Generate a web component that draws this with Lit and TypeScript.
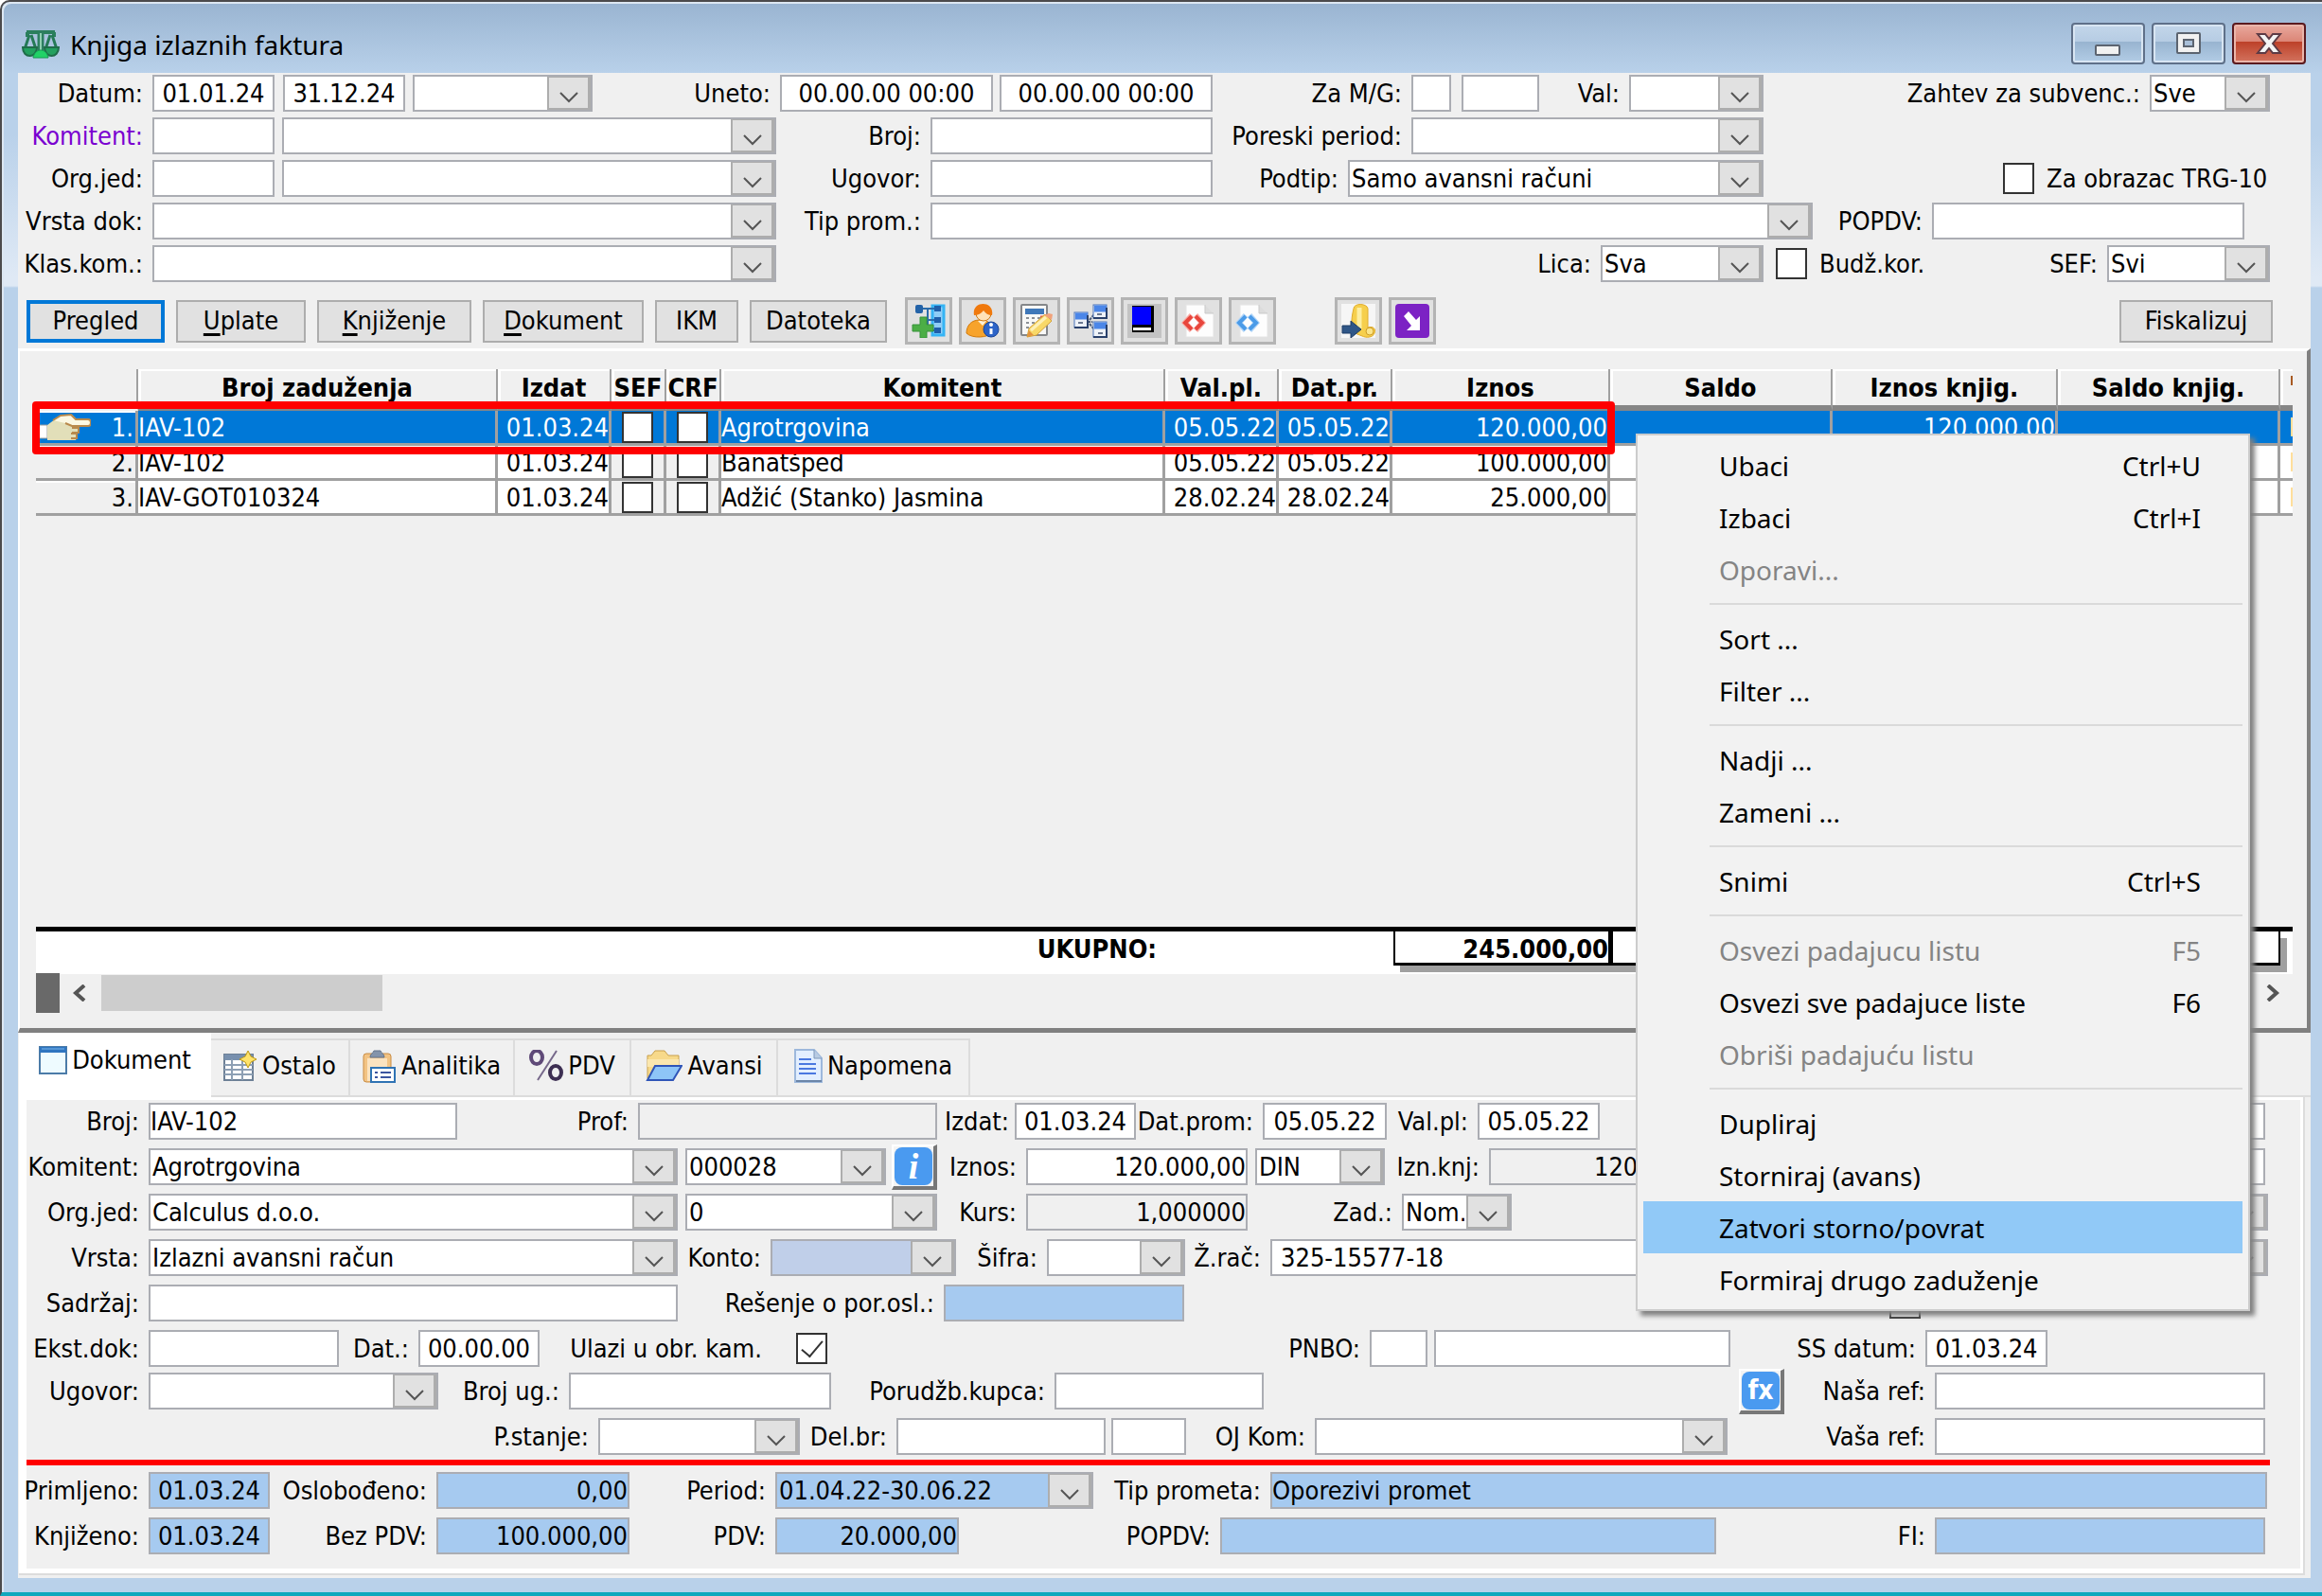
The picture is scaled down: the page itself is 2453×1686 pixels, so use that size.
import { LitElement, html, svg, css, nothing, TemplateResult } from "lit";
import { customElement } from "lit/decorators.js";
import { classMap } from "lit/directives/class-map.js";
import { styleMap } from "lit/directives/style-map.js";

/* ---------- form description ---------- */

interface Cell {
  kind: "label" | "after" | "field" | "combo" | "gap" | "check" | "tool";
  w: number;
  text?: string;
  cls?: string;
  checked?: boolean;
  icon?: TemplateResult;
}

const L = (text: string, w: number, cls = ""): Cell => ({ kind: "label", w, text, cls });
const A = (text: string, w: number): Cell => ({ kind: "after", w, text });
const F = (w: number, text = "", cls = ""): Cell => ({ kind: "field", w, text, cls });
const C = (w: number, text = "", cls = ""): Cell => ({ kind: "combo", w, text, cls });
const G = (w: number): Cell => ({ kind: "gap", w });
const K = (w: number, checked = false): Cell => ({ kind: "check", w, checked });
const T = (w: number, text: string, icon: TemplateResult): Cell => ({ kind: "tool", w, text, icon });

const infoGlyph = html`<span class="glyph glyph-i">i</span>`;
const fxGlyph = html`<span class="glyph">fx</span>`;

const filterRows: Cell[][] = [
  [L("Datum:", 142), F(129, "01.01.24", "mid"), G(9), F(129, "31.12.24", "mid"), G(8), C(190), L("Uneto:", 198),
    F(225, "00.00.00 00:00", "mid"), G(7), F(225, "00.00.00 00:00", "mid"), L("Za M/G:", 210), F(42), G(11), F(82),
    L("Val:", 95), C(142), L("Zahtev za subvenc.:", 408), C(127, "Sve"), G(43)],
  [L("Komitent:", 142, "violet"), F(129), G(8), C(522), L("Broj:", 163), F(298), L("Poreski period:", 210), C(372), G(578)],
  [L("Org.jed:", 142), F(129), G(8), C(522), L("Ugovor:", 163), F(298), L("Podtip:", 143), C(439, "Samo avansni računi"),
    G(253), K(33), A("Za obrazac TRG-10", 292)],
  [L("Vrsta dok:", 142), C(659), L("Tip prom.:", 163), C(932), L("POPDV:", 126), F(330), G(70)],
  [L("Klas.kom.:", 142), C(659), L("Lica:", 871), C(172, "Sva"), G(13), K(33), A("Budž.kor.", 133), L("SEF:", 184),
    C(172, "Svi"), G(43)],
];

const detailRows: Cell[][] = [
  [L("Broj:", 129), F(326, "IAV-102", "flush"), L("Prof:", 191), F(316, "", "off"), L("Izdat:", 82, "tight"),
    F(128, "01.03.24", "mid"), L("Dat.prom:", 134), F(131, "05.05.22", "mid"), L("Val.pl:", 96), F(129, "05.05.22", "mid"),
    G(354), F(349), G(37)],
  [L("Komitent:", 129), C(559, "Agrotrgovina"), G(8), C(212, "000028"), G(6), T(48, "Informacije", infoGlyph),
    L("Iznos:", 94), F(234, "120.000,00", "end"), G(8), C(137, "DIN"), L("Izn.knj:", 110), F(252, "120.000,00", "end off"),
    G(219), F(349), G(37)],
  [L("Org.jed:", 129), C(559, "Calculus d.o.o."), G(8), C(266, "0"), L("Kurs:", 94), F(234, "1,000000", "end off"),
    L("Zad.:", 163), C(116, "Nom."), G(447), C(352), G(34)],
  [L("Vrsta:", 129), C(559, "Izlazni avansni račun"), L("Konto:", 98), C(196, "", "lilac"), L("Šifra:", 96), C(146),
    L("Ž.rač:", 90), F(483, "325-15577-18", "inset"), G(219), C(352), G(34)],
  [L("Sadržaj:", 129), F(559), L("Rešenje o por.osl.:", 281), F(254, "", "blue"), G(745), K(33), G(401)],
  [L("Ekst.dok:", 129), F(201), L("Dat.:", 84), F(128, "00.00.00", "mid"), L("Ulazi u obr. kam.", 245), G(26), K(33, true),
    L("PNBO:", 573), F(61), G(7), F(313), L("SS datum:", 206), F(129, "01.03.24", "mid"), G(267)],
];

const referenceRows: Cell[][] = [
  [L("Ugovor:", 129), C(306), L("Broj ug.:", 138), F(277), L("Porudžb.kupca:", 236), F(221), G(502),
    T(48, "Formula", fxGlyph), L("Naša ref:", 159), F(349), G(37)],
  [L("P.stanje:", 604), C(213), L("Del.br:", 102), F(221), G(6), F(79), L("OJ Kom:", 136), C(436), L("Vaša ref:", 219),
    F(349), G(37)],
];

const postingRows: Cell[][] = [
  [L("Primljeno:", 129), F(128, "01.03.24", "mid blue"), L("Oslobođeno:", 176), F(204, "0,00", "end blue"),
    L("Period:", 154), C(336, "01.04.22-30.06.22", "blue"), L("Tip prometa:", 187), F(1053, "Oporezivi promet", "flush blue"), G(35)],
  [L("Knjiženo:", 129), F(128, "01.03.24", "mid blue"), L("Bez PDV:", 176), F(204, "100.000,00", "end blue"),
    L("PDV:", 154), F(194, "20.000,00", "end blue"), L("POPDV:", 276), F(524, "", "blue"), L("FI:", 231), F(349, "", "blue"), G(37)],
];

/* ---------- invoice grid ---------- */

const columns: [string, number][] = [
  ["", 108], ["Broj zaduženja", 380], ["Izdat", 120], ["SEF", 58], ["CRF", 58], ["Komitent", 469], ["Val.pl.", 120],
  ["Dat.pr.", 120], ["Iznos", 230], ["Saldo", 235], ["Iznos knjig.", 238], ["Saldo knjig.", 235], ["", 13],
];
const gridWidth = columns.reduce((sum, c) => sum + c[1], 0);

const invoices = [
  { no: "IAV-102", issued: "01.03.24", client: "Agrotrgovina", due: "05.05.22", traded: "05.05.22", amount: "120.000,00" },
  { no: "IAV-102", issued: "01.03.24", client: "Banatšped", due: "05.05.22", traded: "05.05.22", amount: "100.000,00" },
  { no: "IAV-GOT010324", issued: "01.03.24", client: "Adžić (Stanko) Jasmina", due: "28.02.24", traded: "28.02.24", amount: "25.000,00" },
];

/* ---------- context menu ---------- */

type MenuEntry = [string, string?, string?] | null;
const menu: MenuEntry[] = [
  ["Ubaci", "Ctrl+U"], ["Izbaci", "Ctrl+I"], ["Oporavi...", "", "dim"], null,
  ["Sort ..."], ["Filter ..."], null,
  ["Nadji ..."], ["Zameni ..."], null,
  ["Snimi", "Ctrl+S"], null,
  ["Osvezi padajucu listu", "F5", "dim"], ["Osvezi sve padajuce liste", "F6"], ["Obriši padajuću listu", "", "dim"], null,
  ["Dupliraj"], ["Storniraj (avans)"], ["Zatvori storno/povrat", "", "hot"], ["Formiraj drugo zaduženje"],
];

/* ---------- icons ---------- */

const icon = (w: number, h: number, body: TemplateResult) =>
  html`<svg width=${w} height=${h} viewBox="0 0 ${w} ${h}" fill="none" aria-hidden="true">${body}</svg>`;

const scales = icon(40, 30, svg`
  <path d="M5 2h30M6 2v5M34 2v5" stroke="#2b7f5d" stroke-width="4"/>
  <path d="M20 1v22" stroke="#2d7f60" stroke-width="7"/><path d="M20 3v19" stroke="#8fcfb0" stroke-width="2"/>
  <path d="M8 5 3 20h12L10 5M32 5l5 15H25l5-15" stroke="#257a56" stroke-width="3" stroke-linejoin="round"/>
  <path d="M1 18h15c0 12-15 12-15 0zM24 18h15c0 12-15 12-15 0z" fill="#23a05f" stroke="#1f6d49" stroke-width="2"/>
  <path d="M12 29c1-5 4-8 8-8s7 3 8 8z" fill="#21d267" stroke="#159a52"/>`);

const treeAdd = icon(36, 36, svg`
  <rect x="22" y="2" width="12" height="31" fill="#8fcdf6" stroke="#35b4f5" stroke-width="3"/>
  <path d="M8 5h17M17 5v23M17 17h8M17 28h8" stroke="#2b6cab" stroke-width="2"/>
  <rect x="4" y="1" width="8" height="9" rx="2" fill="#2463a8"/>
  <path d="M24 2h7v6h-7zM24 14h7v6h-7zM24 25h7v6h-7z" fill="#1f5fab"/>
  <path d="M9 14h7v8h7v7h-7v7H9v-7H1v-7h8z" fill="#4cae46" stroke="#36923a"/>`);

const userInfo = icon(36, 36, svg`
  <path d="M1 31c0-8 5-14 14-14s14 4 14 13c-5 6-22 7-28 1z" fill="#f7a32b" stroke="#d27a0c"/>
  <path d="M13 18l5 5 5-6z" fill="#fff1d6"/><circle cx="19" cy="10" r="8" fill="#ffe2b8" stroke="#cf7912"/>
  <path d="M9 12c-3-16 22-16 19 0-4 0-7-2-9-5-2 3-6 5-10 5z" fill="#f0790d"/>
  <circle cx="27" cy="27" r="8" fill="#2d64c8" stroke="#1b4596"/>
  <path d="M27 26v6" stroke="#fff" stroke-width="3"/><circle cx="27" cy="22" r="2" fill="#fff"/>`);

const calcEdit = icon(36, 36, svg`
  <rect x="2" y="1" width="27" height="32" rx="1" fill="#f8f8f7" stroke="#85878a" stroke-width="2"/>
  <rect x="6" y="5" width="20" height="6" fill="#3f78b9"/>
  <path d="M7 15h19M7 20h19M7 25h19" stroke="#8b9096" stroke-width="2" stroke-dasharray="3 3"/>
  <path d="M22 14h5" stroke="#e05a4a" stroke-width="3"/>
  <path d="M8 35l2-9 17-15 7 7-16 15z" fill="#f8d868" stroke="#d3a13a"/><path d="M12 28l16-14" stroke="#fdf0b8" stroke-width="3"/>
  <path d="M26 12l5-2 4 1-1 6z" fill="#f1a27b"/><path d="M8 35l2-7 5 5z" fill="#e3923c"/>`);

const hierarchy = icon(36, 36, svg`
  <path d="M15 19h5M17 17l5-6M17 21l5 6" stroke="#4c5c78" stroke-width="2" stroke-dasharray="3 1"/>
  <rect x="1" y="9" width="14" height="16" fill="#eef2f8" stroke="#4a74ba"/><path d="M2 13h13" stroke="#4b86e8" stroke-width="7"/>
  <rect x="21" y="1" width="14" height="14" fill="#eef2f8" stroke="#4a74ba"/><path d="M22 5h13" stroke="#4b86e8" stroke-width="7"/>
  <rect x="21" y="19" width="14" height="16" fill="#eef2f8" stroke="#4a74ba"/><path d="M22 23h13" stroke="#4b86e8" stroke-width="7"/>
  <path d="M1 25h14V12M21 15h14V4M21 35h14V22" stroke="#29406b" stroke-width="2"/>
  <path d="M5 20h5M25 11h5M26 31h5" stroke="#6b7890" stroke-width="2"/>`);

const book = icon(36, 36, svg`
  <rect width="36" height="36" fill="#c3c3c3"/>
  <path d="M5 2h23v28H5z" fill="#000"/><path d="M5 3h20v19H5z" fill="#0000ff"/>
  <path d="M6 25h19v3H6z" fill="#fff"/>`);

const codeFile = (ink: string, light: string) => icon(36, 36, svg`
  <path d="M5 1h20l9 9v25H5z" fill="#fdfdfd" stroke="#e4e4e4"/><path d="M25 1v9h9" fill="#dcdcdc" stroke="#c9c9c9"/>
  <path d="M11 12l-7 8 7 8M15 12l7 8-7 8" stroke=${light} stroke-width="6"/>
  <path d="M11 13l-7 7 7 7M15 13l7 7-7 7" stroke=${ink} stroke-width="4"/>`);

const scroll = icon(36, 36, svg`
  <rect width="36" height="36" fill="#f6f6f6"/>
  <path d="M13 5c0-6 14-6 15 0v20c6-2 9 2 7 6-2 5-9 5-13 3l-10-4c-2-9-1-17 1-25z" fill="#f6cf4d" stroke="#e0ac2c"/>
  <path d="M19 4v22" stroke="#fdeea2" stroke-width="5"/><circle cx="30" cy="29" r="4" fill="#fbe58a" stroke="#cf9d25"/>
  <path d="M1 23h9v-5l11 9-11 9v-5H1z" fill="#2f5687" stroke="#1f3d66"/>`);

const purpleArrow = icon(36, 36, svg`
  <rect width="36" height="36" rx="4" fill="#7c22c4"/>
  <path d="M9 13l5-5 8 9 4-4v15H12l5-5z" fill="#fff"/>`);

const tabIcons: Record<string, TemplateResult> = {
  Dokument: icon(30, 30, svg`<rect x="1" y="1" width="28" height="28" fill="#eefbff" stroke="#4b7ba8" stroke-width="2"/>
    <path d="M1 4h28" stroke="#2f75c0" stroke-width="6"/><path d="M3 3h24" stroke="#7db8ec"/>`),
  Ostalo: icon(36, 34, svg`<rect x="1" y="5" width="30" height="27" fill="#fff" stroke="#6d8096" stroke-width="2"/>
    <path d="M1 8h30" stroke="#7890ae" stroke-width="6"/>
    <path d="M1 16h30M1 21h30M1 26h30M9 10v22M20 10v22" stroke="#8d9fb4" stroke-width="2"/>
    <path d="M26 1l3 6 6 3-6 3-3 6-3-6-6-3 6-3z" fill="#ffe36b" stroke="#c09a13"/>`),
  Analitika: icon(36, 36, svg`<rect x="1" y="5" width="29" height="30" rx="3" fill="#f2c384" stroke="#c98c43"/>
    <path d="M5 10h21v24H5z" fill="#fbe3c0"/><path d="M8 9c0-4 3-4 4-7h7c1 3 4 3 4 7z" fill="#8494ab" stroke="#65758c"/>
    <rect x="9" y="20" width="25" height="15" fill="#fff" stroke="#2f73b4" stroke-width="2"/>
    <path d="M13 25h3M13 30h3M19 25h11M19 30h11" stroke="#3c55a0" stroke-width="2"/>`),
  PDV: icon(36, 34, svg`<ellipse cx="8" cy="8" rx="6" ry="7" stroke="#5f4a78" stroke-width="4"/>
    <ellipse cx="28" cy="24" rx="6" ry="7" stroke="#3d2f52" stroke-width="4"/>
    <path d="M29 1 9 32" stroke="#76688a" stroke-width="2"/>`),
  Avansi: icon(40, 34, svg`<path d="M3 30V6h4l4-5h10l4 5h11v10" fill="#f7d98a" stroke="#c8a04c"/>
    <path d="M3 10h33v8H3z" fill="#fbe7ae"/><path d="M3 32l8-15h28l-9 15z" fill="#8ec5f7" stroke="#2f55b8" stroke-width="2"/>`),
  Napomena: icon(30, 36, svg`<path d="M1 1h20l8 9v25H1z" fill="#e3efff" stroke="#9db8dc" stroke-width="2"/>
    <path d="M21 1v9h8" fill="#b9cbe2" stroke="#7f98ba"/><path d="M2 34h27" stroke="#6b85a8" stroke-width="2"/>
    <path d="M5 11h13M5 16h18M5 21h18M5 26h18" stroke="#4a78e0" stroke-width="2"/>`),
};

const hand = icon(56, 28, svg`
  <path d="M0 12h10v14H0z" fill="#fff" stroke="#9a9a9a"/><path d="M10 12 22 3l14-2 5 5h12c4 0 4 7 0 7H42l1 5-2 3 1 2-2 5H10z" fill="#e2dfb9"/>
  <path d="M16 7l8-5 11-1 5 5h13c4 0 4 7 0 7H36l-7-3" fill="#fbf8e3" stroke="#b98a4c" stroke-width="2"/>
  <path d="M36 15h7v5h-7M35 21h6v5h-6" stroke="#b98a4c" stroke-width="2"/>`);

const chevron = icon(22, 14, svg`<path d="M2 2l9 9 9-9" stroke="#555" stroke-width="2"/>`);

const tools: [string, TemplateResult][] = [
  ["Stablo", treeAdd], ["Korisnik", userInfo], ["Obračun", calcEdit], ["Veze", hierarchy], ["Dnevnik", book],
  ["XML izlaz", codeFile("#e8463c", "#f9b0aa")], ["XML ulaz", codeFile("#4b9be8", "#b3d6f8")],
];
const extraTools: [string, TemplateResult][] = [["Arhiva", scroll], ["Prenos", purpleArrow]];

@customElement("app-root")
export class AppRoot extends LitElement {
  static styles = css`
    :host { display: block; font: 27px/32px "DejaVu Sans Condensed", "Noto Sans", sans-serif; color: #000; }
    * { box-sizing: border-box; }
    input, select, button { font: inherit; color: inherit; margin: 0; border-radius: 0; }
    svg { display: block; flex: none; }

    .window { position: relative; display: flex; flex-direction: column; min-height: 100vh; padding: 0 12px 15px 17px;
      border: 2px solid #4b4a4c; border-right: 0; border-bottom: 4px solid #10a8bd; border-top-left-radius: 10px;
      background: linear-gradient(#99b4d1 0, #b9d1ea 76px, #b9d1ea 140px, #dfe9f5 290px, #dfe9f5 300px, #b9d1ea 302px);
      box-shadow: inset 2px 2px #dce7f2; }
    .titlebar { display: flex; align-items: flex-start; height: 75px; padding: 22px 5px 0 4px; gap: 11px; }
    .titlebar > svg { margin-top: 8px; }
    h1 { flex: 1; margin: 3px 0 0; font: 400 28px/40px "Noto Sans", sans-serif; }
    .caps { display: flex; gap: 7px; }
    .cap { display: grid; place-items: center; width: 78px; height: 44px; padding: 0; border: 2px solid #5f7089; border-radius: 4px;
      background: linear-gradient(#c3d6ea 0, #b6cce3 45%, #98b4d0 46%, #b3cde6 100%); box-shadow: inset 0 0 0 2px #d8e5f2; }
    .cap-close { border-color: #5b1a1f; background: linear-gradient(#e9a99e 0, #db8576 45%, #bd4129 46%, #d3745f 100%);
      box-shadow: inset 0 0 0 2px #eab5aa; }

    .client { flex: 1; display: flex; flex-direction: column; background: #f0f0f0; }
    .filters { display: grid; gap: 6px; padding-top: 2px; }
    .row { display: grid; align-items: center; height: 39px; }
    .row > * { min-width: 0; }
    label { display: flex; justify-content: flex-end; padding-right: 10px; white-space: nowrap; }
    .tight { padding-right: 6px; }
    .violet { color: #7a00d0; }
    .after { justify-content: flex-start; padding: 0 0 0 13px; }
    .field, .combo { width: 100%; height: 39px; border: 2px solid #abadb3; background: #fff; }
    .field { padding: 0 4px; outline: 0; }
    .field.flush { padding: 0; }
    .field.inset { padding: 0 9px; }
    .field.mid { text-align: center; padding: 0; }
    .field.end { text-align: right; padding: 0; }
    .off { background: #f0f0f0; }
    .blue { background: #a6caf0; }
    .lilac { background: #c0cfe9; }
    .combo { display: grid; grid-template-columns: minmax(0, 1fr) 46px; }
    .combo select { grid-area: 1 / 1 / 2 / 3; appearance: none; width: 100%; padding: 0 48px 0 2px; border: 0; background: none;
      outline: 0; }
    .drop { grid-area: 1 / 2; display: grid; place-items: end center; padding-bottom: 4px; border: 3px solid #adadad;
      border-width: 1px 3px 2px 2px; background: #e1e1e1; pointer-events: none; }
    .check { appearance: none; display: grid; place-items: center; width: 33px; height: 33px; border: 2px solid #333; background: #fff; }
    .check:checked::after { content: ""; width: 10px; height: 20px; margin-top: -6px; border: solid #333; border-width: 0 2px 2px 0;
      transform: rotate(40deg); }
    .badge { display: grid; place-items: center; width: 48px; height: 48px; margin: -5px 0; padding: 0; border: 2px solid #fff;
      border-width: 2px 4px 4px 2px; border-color: #fff #777 #777 #fff; background: #f4f4f4; }
    .glyph { display: grid; place-items: center; width: 40px; height: 40px; border-radius: 8px; background: #4a9af0; color: #fff;
      font-size: 28px; font-weight: 700; }
    .glyph-i { font: italic 700 38px/38px "Liberation Serif", serif; }

    .toolbar { display: flex; align-items: center; gap: 12px; height: 50px; margin: 16px 40px 4px 9px; }
    .btn { height: 45px; padding: 0; border: 2px solid #adadad; background: #e1e1e1; white-space: nowrap; }
    .btn-main { width: 146px; border: 4px solid #0078d7; }
    .w137 { width: 137px; } .w163 { width: 163px; } .w170 { width: 170px; } .w88 { width: 88px; } .w145 { width: 145px; }
    .btn-last { width: 162px; margin-left: auto; }
    u { text-underline-offset: 4px; text-decoration-thickness: 3px; text-decoration-skip-ink: none; }
    .tools { display: flex; gap: 7px; margin-left: 7px; }
    .tools-extra { margin-left: 50px; }
    .tool { display: grid; place-items: center; width: 50px; height: 50px; padding: 0; border: 3px solid #b4b4b4; background: #e1e1e1; }

    .panel { flex: 1; display: flex; flex-direction: column; padding: 19px 15px 17px 17px; border: 3px solid #fff;
      border-width: 3px 4px 5px 2px; border-color: #fff #808080 #808080 #fff; }
    .sheet { position: relative; }
    table { width: 100%; table-layout: fixed; border-collapse: separate; border-spacing: 0; }
    th, td { height: 37px; padding: 0; overflow: hidden; white-space: nowrap; line-height: 33px; }
    th { height: 44px; padding-bottom: 0; border-right: 2px solid #a0a0a0; border-bottom: 6px solid #868686; font-weight: 700;
      box-shadow: inset 3px 2px #fff; text-align: center; }
    th:first-child { border-bottom-color: #f0f0f0; box-shadow: none; }
    th:last-child { border-right: 0; }
    td { border-right: 3px solid #a0a0a0; border-bottom: 3px solid #a0a0a0; background: #fff; text-align: left; }
    td.num { text-align: right; }
    td.box { background: #f0f0f0; }
    td.box .check { margin: 0 auto; }
    td.index { background: #f0f0f0; box-shadow: inset 0 2px #fff; }
    .index-line { display: flex; align-items: center; justify-content: space-between; padding: 0 2px; }
    td:last-child { border-right: 0; }
    .more { width: 2px; height: 20px; margin-left: auto; background: #ffdf9c; }
    th .more { height: 10px; margin-bottom: 14px; background: #a85a22; }
    .on td { background: #0078d7; color: #fff; }
    .marker { position: absolute; left: -4px; top: 34px; height: 56px; border: 8px solid #f00; border-radius: 4px; pointer-events: none; }

    .totals { display: grid; height: 50px; margin-top: auto; border-top: 5px solid #000; background: #fff; font-weight: 700; }
    .totals-label { padding-right: 250px; text-align: right; line-height: 38px; }
    .totals-cell { height: 36px; border: solid #000; border-width: 0 5px 3px 0; text-align: right; line-height: 38px; background: #fff;
      box-shadow: 7px 7px #a0a0a0; }
    .totals-first { border-left-width: 2px; }
    .totals-rest { border-right-width: 2px; }
    .scroller { display: flex; align-items: center; height: 40px; }
    .stub { width: 25px; height: 42px; background: #696969; }
    .thumb { width: 297px; height: 38px; margin-left: 15px; background: #cdcdcd; }
    .arrow { display: grid; place-items: center; width: 16px; height: 38px; margin-left: 13px; padding: 0; border: 0; background: none; }
    .arrow-right { margin: 0 13px 0 auto; }

    .tabs { display: flex; align-items: flex-end; height: 68px; margin-left: 1px; }
    .tab { display: flex; align-items: center; justify-content: center; gap: 5px; height: 62px; padding: 0 0 4px; border: 2px solid #dcdcdc;
      border-width: 2px 2px 2px 0; background: #f0f0f0; white-space: nowrap; }
    .tab-on { height: 68px; padding: 0 0 11px; border: 0; background: #fff; }
    .tab-fill { flex: 1; height: 2px; background: #dcdcdc; }
    .page { margin: 0 6px 3px 1px; padding: 3px 3px 5px 8px; border: solid #dcdcdc; border-width: 0 2px 2px 0; background: #fff; }
    .form { padding: 3px 0 15px; background: #f0f0f0; }
    .block { display: grid; gap: 9px; }
    .block + .block { margin-top: 6px; }
    .rule { height: 6px; margin: 5px 32px 7px 0; border: 0; background: #f00; }

    .menu { position: absolute; top: 456px; right: 76px; width: 649px; padding: 4px 6px; border: 2px solid #ccc; background: #f2f2f2;
      box-shadow: 5px 5px 5px #808080; font: 28px/52px "Noto Sans", sans-serif; z-index: 2; }
    .item { display: flex; justify-content: space-between; width: 100%; height: 55px; padding: 2px 44px 0 80px; border: 0;
      background: none; text-align: left; }
    .dim { color: #848484; }
    .hot { background: #91c9f7; }
    .split { height: 2px; margin: 8px 0 8px 70px; border: 0; background: #dadada; }
  `;

  private cell(row: Cell[], i: number, prefix: string) {
    const c = row[i];
    const isControl = (x: Cell) => x.kind === "field" || x.kind === "combo" || x.kind === "check";
    const id = `${prefix}-${i}`;
    if (c.kind === "gap") return html`<span></span>`;
    if (c.kind === "after") return html`<label class="after" for=${`${prefix}-${i - 1}`}>${c.text}</label>`;
    if (c.kind === "label") {
      let next = i + 1;
      while (next < row.length && !isControl(row[next])) next++;
      return html`<label class=${c.cls ?? ""} for=${`${prefix}-${next}`}>${c.text}</label>`;
    }
    if (c.kind === "tool") return html`<button class="badge" aria-label=${c.text}>${c.icon}</button>`;
    let k = i - 1;
    while (k > 0 && row[k].kind !== "label") k--;
    const between = row.slice(k + 1, i).some(isControl);
    const name = between && row[i + 1]?.kind !== "after" ? row[k].text!.replace(":", "") : nothing;
    if (c.kind === "check") return html`<input class="check" type="checkbox" id=${id} aria-label=${name} .checked=${!!c.checked} />`;
    if (c.kind === "combo") {
      return html`<span class="combo ${c.cls}">
        <select id=${id} aria-label=${name}><option>${c.text}</option></select><span class="drop">${chevron}</span></span>`;
    }
    const off = (c.cls ?? "").includes("off");
    return html`<input class="field ${c.cls}" type="text" id=${id} aria-label=${name} .value=${c.text ?? ""} ?readonly=${off} />`;
  }

  private rows(rows: Cell[][], prefix: string) {
    return rows.map((row, r) => html`
      <div class="row" style=${styleMap({ gridTemplateColumns: row.map((c) => `minmax(0, ${c.w}fr)`).join(" ") })}>
        ${row.map((_, i) => this.cell(row, i, `${prefix}${r}`))}
      </div>`);
  }

  private sheet() {
    const share = (w: number) => `${(w / gridWidth) * 100}%`;
    return html`<div class="sheet">
      <table>
        <colgroup>${columns.map((c) => html`<col style=${styleMap({ width: share(c[1]) })} />`)}</colgroup>
        <thead><tr>${columns.map((c, i) => html`<th>${i === columns.length - 1 ? html`<div class="more"></div>` : c[0]}</th>`)}</tr></thead>
        <tbody>${invoices.map((v, i) => html`
          <tr class=${classMap({ on: i === 0 })}>
            <td class="index"><div class="index-line"><span>${i === 0 ? hand : nothing}</span><span>${i + 1}.</span></div></td>
            <td>${v.no}</td><td class="num">${v.issued}</td>
            <td class="box"><input class="check" type="checkbox" aria-label="SEF ${i + 1}" /></td>
            <td class="box"><input class="check" type="checkbox" aria-label="CRF ${i + 1}" /></td>
            <td>${v.client}</td><td class="num">${v.due}</td><td class="num">${v.traded}</td>
            <td class="num">${v.amount}</td><td></td><td class="num">${v.amount}</td><td></td><td><div class="more"></div></td>
          </tr>`)}</tbody>
      </table>
      <div class="marker" style=${styleMap({ width: share(1672) })}></div>
    </div>`;
  }

  private toolButtons(list: [string, TemplateResult][]) {
    return list.map(([name, pic]) => html`<button class="tool" aria-label=${name}>${pic}</button>`);
  }

  render() {
    const tabs: [string, number][] = [["Dokument", 203], ["Ostalo", 147], ["Analitika", 174], ["PDV", 123], ["Avansi", 155], ["Napomena", 203]];
    return html`<main class="window">
      <header class="titlebar">${scales}<h1>Knjiga izlaznih faktura</h1>
        <div class="caps">
          <button class="cap" aria-label="Minimize">${icon(30, 32, svg`<rect x="2" y="18" width="25" height="10" rx="1" fill="#f1f1f1" stroke="#5c6470" stroke-width="2"/>`)}</button>
          <button class="cap" aria-label="Maximize">${icon(30, 32, svg`<rect x="3" y="5" width="24" height="21" rx="1" fill="#f1f1f1" stroke="#5c6470" stroke-width="2"/><rect x="10" y="12" width="10" height="7" fill="#a9bfd8" stroke="#5c6470" stroke-width="2"/>`)}</button>
          <button class="cap cap-close" aria-label="Close">${icon(30, 32, svg`<path d="M3 6h8l4 5 4-5h8l-8 10 8 10h-8l-4-5-4 5H3l8-10z" fill="#f4f4f4" stroke="#5d3b45" stroke-width="2"/>`)}</button>
        </div>
      </header>
      <div class="client">
        <section class="filters">${this.rows(filterRows, "f")}</section>
        <nav class="toolbar">
          <button class="btn btn-main">Pregled</button>
          <button class="btn w137"><u>U</u>plate</button>
          <button class="btn w163"><u>K</u>njiženje</button>
          <button class="btn w170"><u>D</u>okument</button>
          <button class="btn w88">IKM</button>
          <button class="btn w145">Datoteka</button>
          <div class="tools">${this.toolButtons(tools)}</div>
          <div class="tools tools-extra">${this.toolButtons(extraTools)}</div>
          <button class="btn btn-last">Fiskalizuj</button>
        </nav>
        <section class="panel">
          ${this.sheet()}
          <div class="totals" style=${styleMap({ gridTemplateColumns: "1434fr 232fr 235fr 238fr 232fr 13fr" })}>
            <span class="totals-label">UKUPNO:</span><span class="totals-cell totals-first">245.000,00</span>
            <span class="totals-cell"></span><span class="totals-cell"></span><span class="totals-cell totals-rest"></span>
          </div>
          <div class="scroller">
            <span class="stub"></span>
            <button class="arrow" aria-label="Levo">${icon(16, 18, svg`<path d="M13 1 4 9l9 8" stroke="#555" stroke-width="4"/>`)}</button>
            <span class="thumb"></span>
            <button class="arrow arrow-right" aria-label="Desno">${icon(16, 18, svg`<path d="M3 1l9 8-9 8" stroke="#555" stroke-width="4"/>`)}</button>
          </div>
        </section>
        <div class="tabs" role="tablist">
          ${tabs.map(([name, w], i) => html`<button role="tab" aria-selected=${i === 0} class=${classMap({ tab: true, "tab-on": i === 0 })}
            style=${styleMap({ width: `${w}px` })}>${tabIcons[name]}<span>${name}</span></button>`)}
          <span class="tab-fill"></span>
        </div>
        <section class="page"><div class="form">
          <div class="block">${this.rows(detailRows, "d")}</div>
          <div class="block">${this.rows(referenceRows, "r")}</div>
          <hr class="rule" />
          <div class="block">${this.rows(postingRows, "p")}</div>
        </div></section>
      </div>
      <div class="menu" role="menu">
        ${menu.map((m) => m
          ? html`<button role="menuitem" class="item ${m[2] ?? ""}"><span>${m[0]}</span><span>${m[1] ?? ""}</span></button>`
          : html`<hr class="split" />`)}
      </div>
    </main>`;
  }
}
